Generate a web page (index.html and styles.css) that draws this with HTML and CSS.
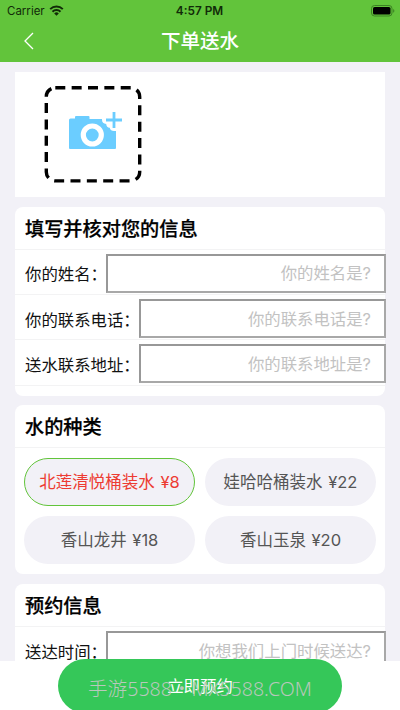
FILE: index.html
```html
<!DOCTYPE html>
<html lang="zh-CN">
<head>
<meta charset="utf-8">
<title>下单送水</title>
<link rel="stylesheet" href="styles.css">
</head>
<body>
<div class="app">
  <header class="header">
    <div class="status">
      <span class="carrier">Carrier
        <svg class="wifi" width="15" height="11" viewBox="0 0 14 11"><g fill="none" stroke="#112b08" stroke-width="2"><path d="M.7 4.100a9 9 0 0 1 12.600 0"/><path d="M3 6.700a5.700 5.700 0 0 1 8 0"/></g><path d="M4.700 8.400a3.300 3.300 0 0 1 4.600 0L7 10.800z" fill="#112b08"/></svg>
      </span>
      <span class="clock">4:57 PM</span>
      <svg class="battery" width="24" height="12" viewBox="0 0 24 12"><rect x=".5" y=".5" width="20.500" height="10.500" rx="3" fill="none" stroke="#3c8124"/><rect x="2" y="2" width="17.500" height="7.500" rx="1.600" fill="#000"/><path d="M22.200 4v3.800c1.600-.6 1.600-3.200 0-3.800z" fill="#3c8124"/></svg>
    </div>
    <div class="nav">
      <svg class="back" width="10" height="18" viewBox="0 0 10 18"><path d="M9 1 1 9l8 8" fill="none" stroke="#fff" stroke-width="1.300"/></svg>
      <h1 class="title">下单送水</h1>
      <span></span>
    </div>
  </header>
  <main class="content">
    <section class="photo">
      <svg width="99" height="97" viewBox="0 0 99 97">
        <rect x="2.300" y="1.700" width="93.400" height="93.200" rx="9" fill="none" stroke="#000" stroke-width="3.400" stroke-dasharray="10 6.350"/>
        <path d="M26.500 32.500H31V31q0-1 1-1h12.500q1 0 1 1v2H58v.8q0 3.700 4.200 4.200.3 3.500 3.500 3.700.8 3.300 4.300 3.300h2V62q0 1-1 1H26q-1 0-1-1V34q0-1.500 1.500-1.500z" fill="#6bcdff"/>
        <circle cx="48.300" cy="49" r="9" fill="#6bcdff" stroke="#fff" stroke-width="5.200"/>
        <path d="M70 26v16M62 34h16" stroke="#6bcdff" stroke-width="2.800"/>
      </svg>
    </section>
    <section class="card info">
      <h2 class="heading">填写并核对您的信息</h2>
      <label class="row"><span>你的姓名：</span><input class="field" placeholder="你的姓名是?"></label>
      <label class="row"><span>你的联系电话：</span><input class="field" placeholder="你的联系电话是?"></label>
      <label class="row"><span>送水联系地址：</span><input class="field" placeholder="你的联系地址是?"></label>
    </section>
    <section class="card kinds">
      <h2 class="heading">水的种类</h2>
      <div class="options">
        <div class="option selected">北莲清悦桶装水 ¥8</div>
        <div class="option">娃哈哈桶装水 ¥22</div>
        <div class="option">香山龙井 ¥18</div>
        <div class="option">香山玉泉 ¥20</div>
      </div>
    </section>
    <section class="card booking">
      <h2 class="heading">预约信息</h2>
      <label class="row"><span>送达时间：</span><input class="field" placeholder="你想我们上门时候送达?"></label>
    </section>
  </main>
  <footer class="footer">
    <div class="submit">立即预约</div>
    <div class="watermark">手游5588・MX5588.COM</div>
  </footer>
</div>
</body>
</html>
```
FILE: styles.css
```css
* { box-sizing: border-box; }
body { margin: 0; font-family: "Inter", "Noto Sans CJK SC", sans-serif; background: #fff; }
.app { position: relative; width: 400px; height: 710px; overflow: hidden; display: flex; flex-direction: column; }
.header { height: 62px; flex: none; background: #62c43b; }
.status { height: 21px; display: grid; grid-template-columns: 1fr auto 1fr; align-items: center; padding: 0 5px 0 7px; font-size: 11.500px; color: #112b08; }
.carrier { display: flex; align-items: center; gap: 4px; }
.clock { font-weight: 600; font-size: 11.800px; margin-left: -3px; }
.battery { justify-self: end; }
.nav { height: 40px; display: grid; grid-template-columns: 1fr auto 1fr; align-items: center; padding: 0 24px; }
.title { margin: 0; color: #fff; font-size: 19.500px; line-height: 28px; font-weight: 500; }
.content { height: 599px; flex: none; overflow: hidden; padding: 10px 15px 0; background: #f2f1f7; }
.photo { height: 125px; padding: 14px 0 0 29px; background: #fff; }
.card { margin-top: 9.700px; border-radius: 8px; background: #fff; }
.info { height: 189px; }
.kinds { height: 169px; }
.booking { height: 130px; }
.heading { height: 43px; margin: 0; padding: 1px 0 0 10px; border-bottom: 1px solid #f3f3f4; font-size: 19.200px; line-height: 43px; font-weight: 500; -webkit-text-stroke: .25px #000; color: #000; }
.row { display: flex; align-items: center; height: 45.300px; padding: 3px 0 0 10px; border-bottom: 1px solid #f3f3f4; font-size: 16.400px; color: #111; }
.row span { flex: none; }
.field { flex: 1; min-width: 0; height: 39px; margin-left: -1px; margin-right: -1px; padding: 0 13px 0 0; border: 2px solid #989898; border-right-color: #a8a8a8; border-bottom-color: #a8a8a8; border-radius: 0; background: #fff; font: inherit; text-align: right; }
.field::placeholder { color: #c2c2c2; }
.options { display: grid; grid-template-columns: 171px 171px; grid-auto-rows: 48px; gap: 10px; padding: 10px 9px; }
.option { border-radius: 24px; background: #f2f1f7; color: #555; text-align: center; font-size: 16.500px; line-height: 49px; word-spacing: 1px; }
.selected { border: 1px solid #62c43b; color: #ed3b32; line-height: 47px; }
.footer { position: relative; flex: 1; background: #fff; }
.submit { position: absolute; left: 58px; top: -2px; width: 284px; height: 54px; border-radius: 27px; background: #35c759; color: #fff; font-size: 16.400px; line-height: 54px; text-align: center; }
.watermark { position: absolute; left: 88px; top: 14px; width: 240px; font-family: "Noto Sans", "Noto Sans CJK SC", sans-serif; font-size: 19.600px; font-weight: 300; line-height: 28px; white-space: nowrap; color: #b9c8bc; }
```
